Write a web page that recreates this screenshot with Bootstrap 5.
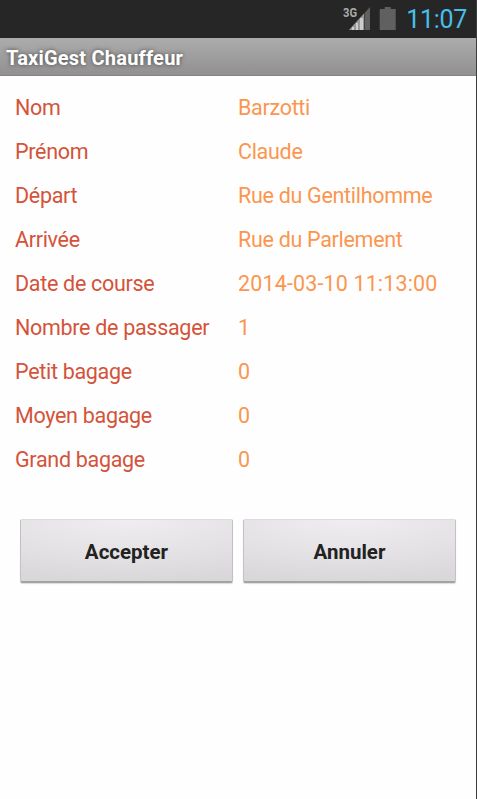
<!DOCTYPE html>
<html lang="fr">
<head>
<meta charset="utf-8">
<meta name="viewport" content="width=device-width, initial-scale=1">
<title>TaxiGest Chauffeur</title>
<link href="https://cdn.jsdelivr.net/npm/bootstrap@5.3.0/dist/css/bootstrap.min.css" rel="stylesheet">
<style>
body{font-family:Roboto,"Liberation Sans",sans-serif;background:#fefefe;color:#222}
.screen{height:100vh;border-right:1px solid #3b3d3f;overflow:hidden}
.statusbar{height:38px;background:#262626;padding-right:9px}
.clock{font-size:25px;line-height:38px;padding-top:1px;height:38px;color:#46bfea;font-weight:400;letter-spacing:-.3px}
.titlebar{height:38px;padding-left:6px;background:linear-gradient(#acacac,#929091);border-bottom:1px solid #878586}
.titlebar h1{font-size:20px;line-height:40px;color:#fff;font-weight:700;letter-spacing:.22px;text-shadow:0 0 4px #444}
.details{padding:10px 0 0 15px;font-size:21.5px;line-height:44px;letter-spacing:-.3px}
.details dt,.details dd{height:44px;white-space:nowrap;margin:0;font-weight:400}
.details dt{width:223px;color:#d4533a}
.details dd{color:#fb9650}
.details .digits{letter-spacing:.14px}
.actions{padding:37px 20px 0;gap:10px}
.btn-holo{height:64px;border-radius:2px;border:1px solid #c3c1c3;border-top-color:#dddbdd;border-bottom:2px solid #a3a3a3;background:radial-gradient(ellipse 110% 100% at 50% 0,#efedef,#e3e1e3 60%,#d9d7d9);font-size:20.5px;font-weight:700;color:#222;padding:4px 0 0;box-shadow:0 1px 1px #ddd}
</style>
</head>
<body>
<div class="screen d-flex flex-column">
<header class="statusbar d-flex justify-content-end align-items-center flex-shrink-0">
<svg width="63" height="38" viewBox="0 0 63 38" aria-hidden="true">
<text x="0" y="17" font-family="Roboto,sans-serif" font-size="12" font-weight="700" fill="#aaa" textLength="14" lengthAdjust="spacingAndGlyphs">3G</text>
<path d="M6 30L27 7V30Z" fill="#606060"/>
<path d="M6 30L21 13.5V30Z" fill="#989898"/>
<path d="M9 30V27h2v3zM13 30V23h2v7zM17 30V18h3v12z" fill="#ccc"/>
<path d="M21.5 13V30" stroke="#444"/>
<path d="M36.7 9h5V7h6v2h5v21h-16z" fill="#606060"/>
</svg>
<div class="clock">11:07</div>
</header>
<div class="titlebar flex-shrink-0"><h1 class="m-0">TaxiGest Chauffeur</h1></div>
<main>
<dl class="details m-0">
<div class="d-flex"><dt>Nom</dt><dd>Barzotti</dd></div>
<div class="d-flex"><dt>Prénom</dt><dd>Claude</dd></div>
<div class="d-flex"><dt>Départ</dt><dd>Rue du Gentilhomme</dd></div>
<div class="d-flex"><dt>Arrivée</dt><dd>Rue du Parlement</dd></div>
<div class="d-flex"><dt>Date de course</dt><dd class="digits">2014-03-10 11:13:00</dd></div>
<div class="d-flex"><dt>Nombre de passager</dt><dd>1</dd></div>
<div class="d-flex"><dt>Petit bagage</dt><dd>0</dd></div>
<div class="d-flex"><dt>Moyen bagage</dt><dd>0</dd></div>
<div class="d-flex"><dt>Grand bagage</dt><dd>0</dd></div>
</dl>
<div class="actions d-flex">
<button type="button" class="btn btn-holo flex-fill w-50">Accepter</button>
<button type="button" class="btn btn-holo flex-fill w-50">Annuler</button>
</div>
</main>
</div>
<script src="https://cdn.jsdelivr.net/npm/bootstrap@5.3.0/dist/js/bootstrap.bundle.min.js"></script>
</body>
</html>
